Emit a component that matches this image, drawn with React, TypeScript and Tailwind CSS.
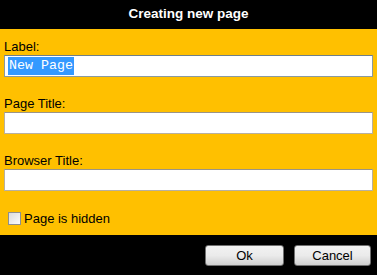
export default function App() {
  const fields = ["Page Title:", "Browser Title:"];

  return (
    <div className="w-[377px] h-[275px] flex flex-col bg-black font-['Liberation_Sans',Arial,sans-serif] text-[13px] text-black">
      <div className="h-[29px] flex items-center justify-center text-white font-bold text-[13.5px]">
        Creating new page
      </div>

      <div className="h-[206px] bg-[#ffc000] px-[4px] pt-[10px]">
        <div className="mb-[19px]">
          <div className="leading-[15px] h-[16px]">Label:</div>
          <div className="h-[22px] bg-white border border-[#8a9aa0] border-t-[#6f7f88] flex items-center pl-[3px]">
            <span className="bg-[#3399ff] text-white font-['Courier_New','Liberation_Mono',monospace] text-[13.33px] leading-[18px] px-[1px]">
              New Page
            </span>
          </div>
        </div>

        {fields.map((f) => (
          <div key={f} className="mb-[19px]">
            <div className="leading-[15px] h-[16px]">{f}</div>
            <div className="h-[22px] bg-white border border-[#b8b0a0] border-t-[#9a9488]" />
          </div>
        ))}

        <div className="flex items-center gap-[3px] pl-[4px] pt-[1px]">
          <div className="w-[13px] h-[13px] border border-[#8e8f8f] bg-gradient-to-br from-[#dcdcdc] to-[#fbfbfb]" />
          <span className="leading-[15px]">Page is hidden</span>
        </div>
      </div>

      <div className="flex-1 flex items-center justify-end gap-[10px] pr-[6px]">
        <button className="w-[79px] h-[21px] rounded-[3px] border border-[#707070] bg-gradient-to-b from-[#f2f2f2] via-[#ebebeb] to-[#cfcfcf] text-[13px] leading-none">
          Ok
        </button>
        <button className="w-[77px] h-[21px] rounded-[3px] border border-[#707070] bg-gradient-to-b from-[#f2f2f2] via-[#ebebeb] to-[#cfcfcf] text-[13px] leading-none">
          Cancel
        </button>
      </div>
    </div>
  );
}
